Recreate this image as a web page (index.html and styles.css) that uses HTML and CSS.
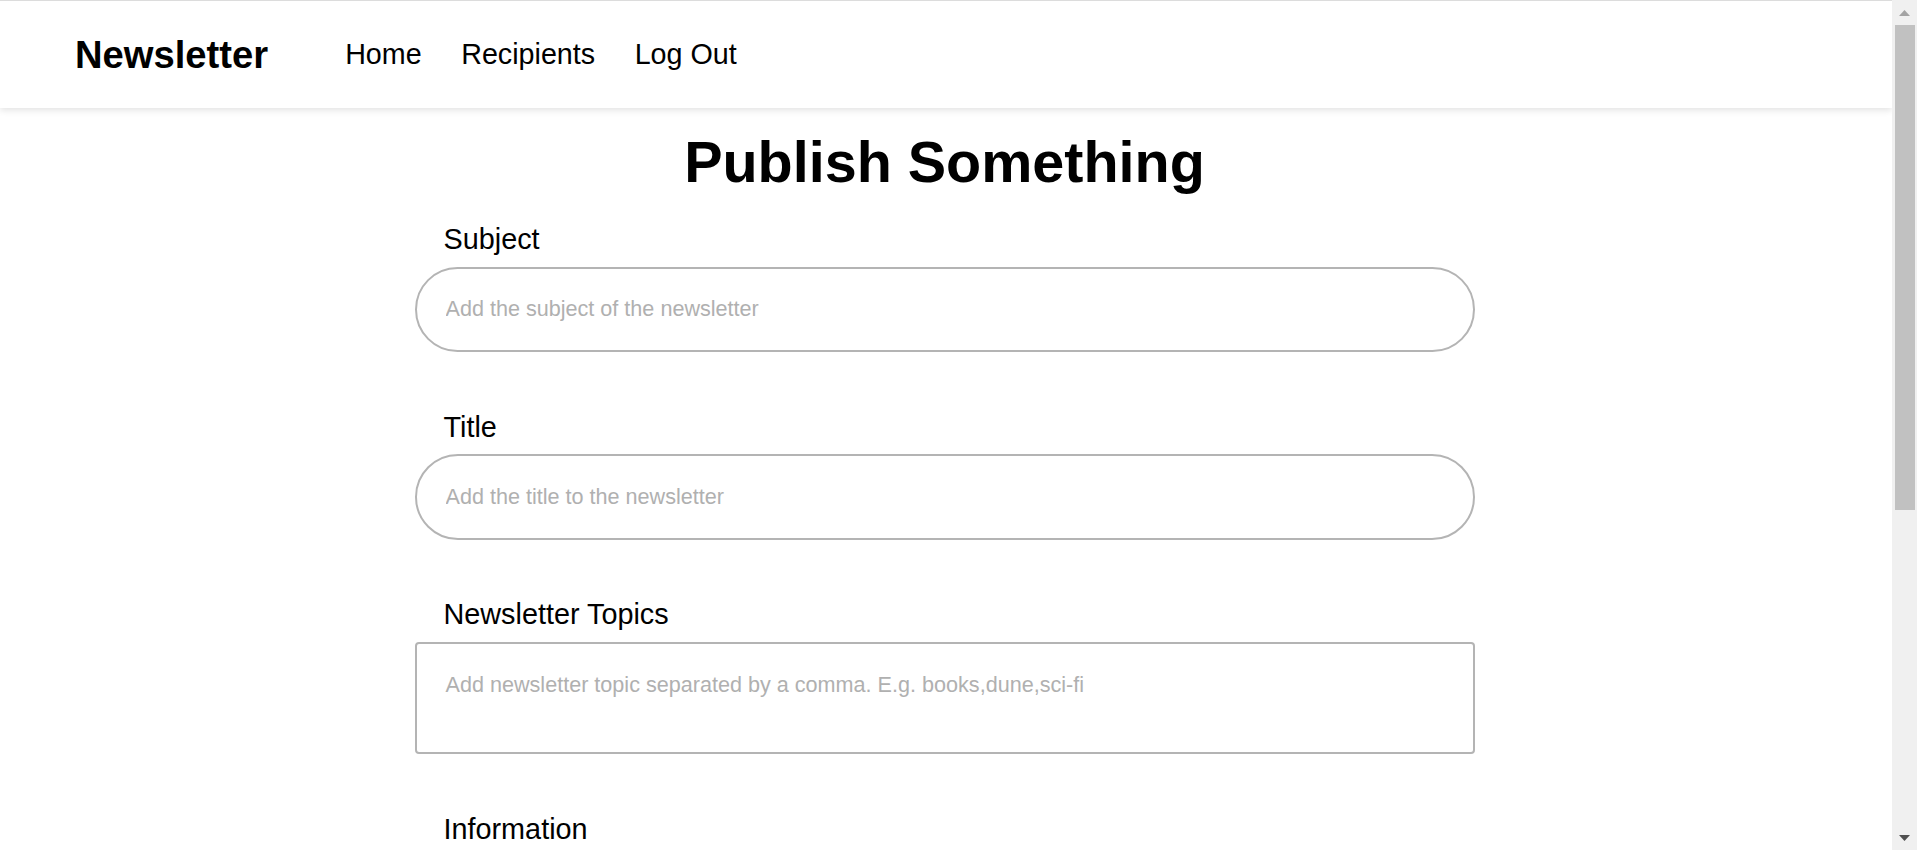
FILE: index.html
```html
<!DOCTYPE html>
<html lang="en">
<head>
<meta charset="utf-8">
<title>Newsletter - Publish Something</title>
<link rel="stylesheet" href="styles.css">
</head>
<body>
<nav class="navbar">
  <a class="brand" href="#">Newsletter</a>
  <ul class="nav-links">
    <li><a href="#">Home</a></li>
    <li><a href="#">Recipients</a></li>
    <li><a href="#">Log Out</a></li>
  </ul>
</nav>
<main class="page">
  <h1 class="page-title">Publish Something</h1>
  <form class="publish-form">
    <div class="field">
      <label class="field-label" for="subject">Subject</label>
      <input class="pill-input" id="subject" type="text" placeholder="Add the subject of the newsletter">
    </div>
    <div class="field">
      <label class="field-label" for="title">Title</label>
      <input class="pill-input" id="title" type="text" placeholder="Add the title to the newsletter">
    </div>
    <div class="field">
      <label class="field-label" for="topics">Newsletter Topics</label>
      <textarea class="box-input topics-input" id="topics" placeholder="Add newsletter topic separated by a comma. E.g. books,dune,sci-fi"></textarea>
    </div>
    <div class="field">
      <label class="field-label" for="information">Information</label>
      <textarea class="box-input info-input" id="information" placeholder="Add the content of the newsletter"></textarea>
    </div>
    <div class="actions">
      <button class="publish-btn" type="submit">Publish</button>
    </div>
  </form>
</main>
<div class="scrollbar" aria-hidden="true">
  <div class="sb-btn">
    <svg width="11" height="6" viewBox="0 0 11 6"><polygon points="0,6 5.5,0 11,6" fill="#a3a3a3"/></svg>
  </div>
  <div class="sb-track"><div class="sb-thumb"></div></div>
  <div class="sb-btn">
    <svg width="11" height="6" viewBox="0 0 11 6"><polygon points="0,0 11,0 5.5,6" fill="#505050"/></svg>
  </div>
</div>
</body>
</html>
```
FILE: styles.css
```css
html,
body {
  margin: 0;
  padding: 0;
}

body {
  font-family: "Liberation Sans", Arial, sans-serif;
  color: #000;
  background: #fff;
  padding-right: 25px;
}

/* ---------- fake window scrollbar (as in the screenshot) ---------- */
.scrollbar {
  position: fixed;
  top: 0;
  right: 0;
  bottom: 0;
  z-index: 5;
  width: 25px;
  display: flex;
  flex-direction: column;
  background: #f0f0f0;
}

.sb-btn {
  height: 25px;
  flex: none;
  display: flex;
  align-items: center;
  justify-content: center;
}

.sb-track {
  flex: 1;
  padding: 0 2px 0 3px;
}

.sb-thumb {
  height: 485px;
  background: #c1c1c1;
}

/* ---------- navbar ---------- */
.navbar {
  position: relative;
  z-index: 1;
  display: flex;
  align-items: center;
  height: 107px;
  padding-left: 75px;
  border-top: 1px solid #dcdcdc;
  background: #fff;
  box-shadow: 0 2px 7px rgba(0, 0, 0, 0.12);
}

.brand {
  font-size: 38.2px;
  font-weight: 700;
  color: #000;
  text-decoration: none;
  margin-right: 77px;
}

.nav-links {
  display: flex;
  gap: 39.5px;
  list-style: none;
  margin: 0;
  padding: 0;
}

.nav-links a {
  font-size: 28.7px;
  color: #000;
  text-decoration: none;
}

/* ---------- page ---------- */
.page {
  padding: 0 3px 126px 0;
}

.page-title {
  margin: 21px 0 28px;
  font-size: 57.5px;
  line-height: 66px;
  font-weight: 700;
  text-align: center;
}

.publish-form {
  width: 1060px;
  margin: 0 auto;
}

.field {
  margin-bottom: 58.5px;
}

.field-label {
  display: block;
  margin: 0 0 11.5px 29px;
  font-size: 28.8px;
  line-height: 32px;
}

.pill-input,
.box-input {
  display: block;
  box-sizing: border-box;
  width: 100%;
  border: 2px solid #b4b4b4;
  background: #fff;
  font-family: "Liberation Sans", Arial, sans-serif;
  font-size: 21.6px;
  color: #000;
  outline: none;
}

.pill-input {
  height: 85.5px;
  padding: 0 29px;
  border-radius: 43px;
}

.box-input {
  padding: 28px 29px;
  border-radius: 4px;
  resize: none;
}

.topics-input {
  height: 112.5px;
}

.info-input {
  height: 300px;
}

.pill-input::placeholder,
.box-input::placeholder {
  color: #b0b0b0;
}

.actions {
  display: flex;
  justify-content: center;
}

.publish-btn {
  height: 60px;
  padding: 0 60px;
  border: 2px solid #b4b4b4;
  border-radius: 30px;
  background: #fff;
  font-family: "Liberation Sans", Arial, sans-serif;
  font-size: 24px;
  color: #000;
}
```
